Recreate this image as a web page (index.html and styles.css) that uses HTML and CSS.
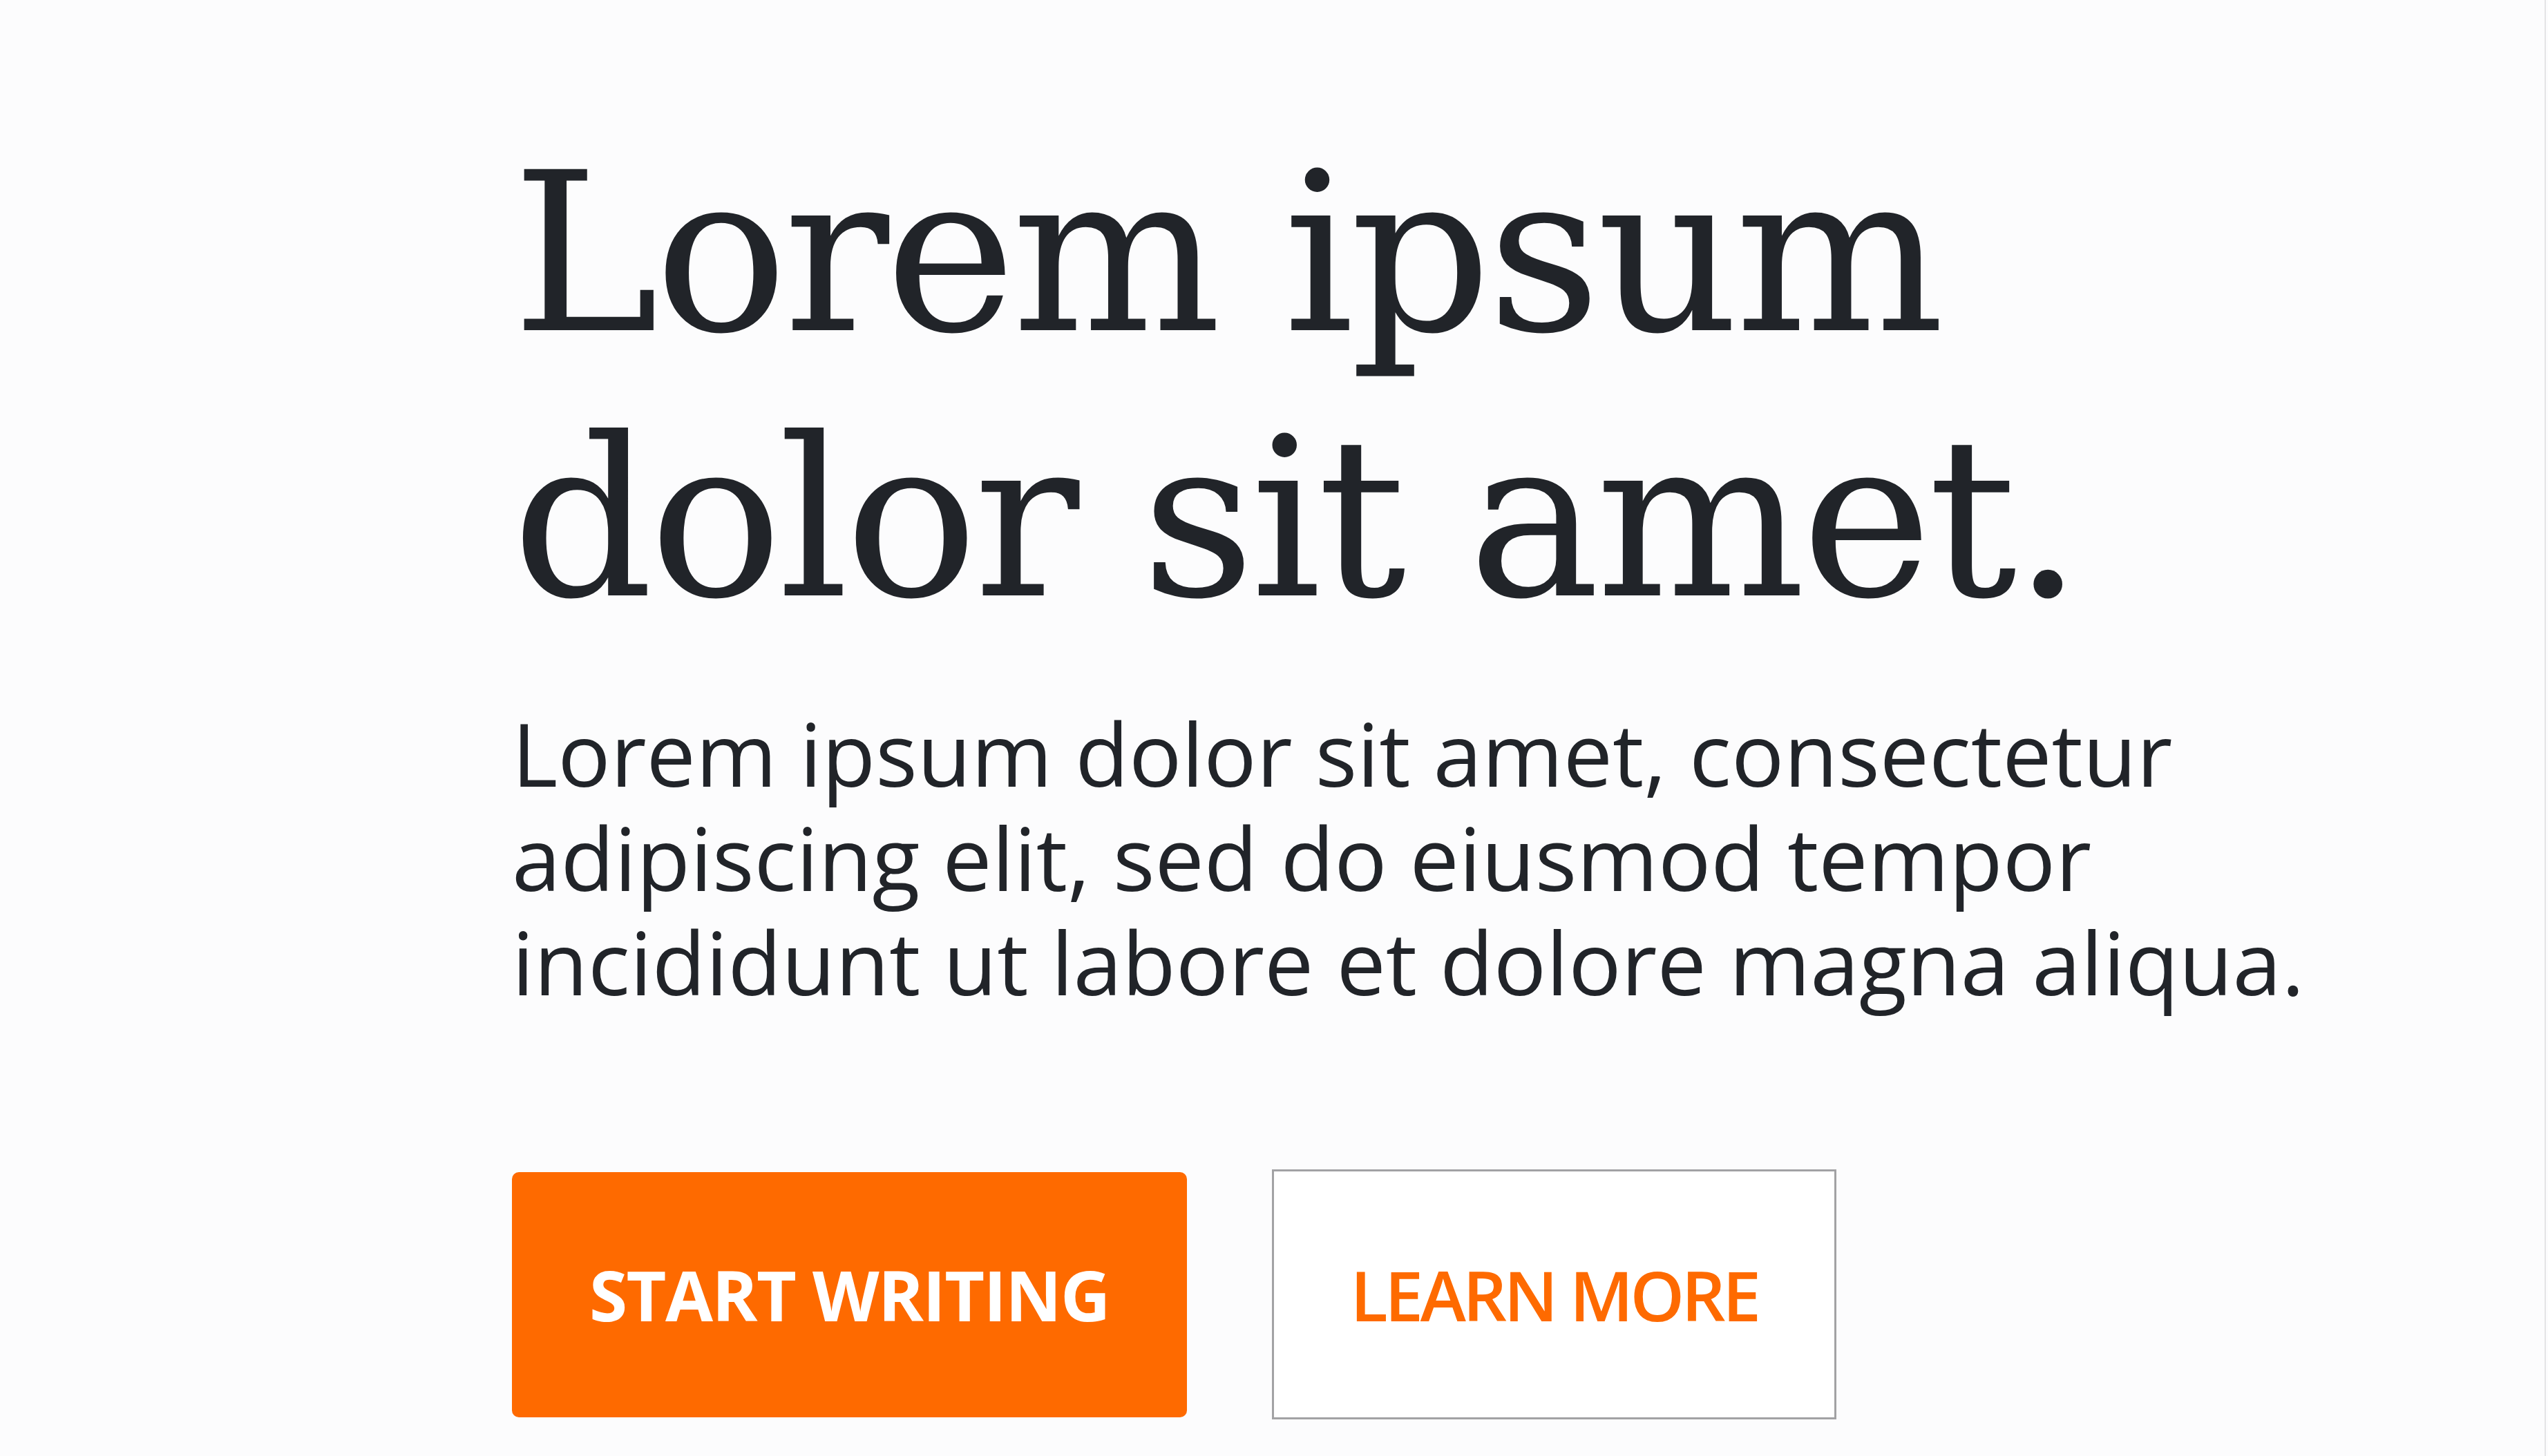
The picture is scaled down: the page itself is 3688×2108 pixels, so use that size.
FILE: index.html
```html
<!DOCTYPE html>
<html lang="en">
<head>
<meta charset="utf-8">
<title>Lorem ipsum</title>
<link rel="stylesheet" href="styles.css">
</head>
<body>
<div class="page">
  <main class="hero">
    <h1 class="hero-title">Lorem ipsum dolor sit amet.</h1>
    <p class="hero-lead">Lorem ipsum dolor sit amet, consectetur adipiscing elit, sed do eiusmod tempor incididunt ut labore et dolore magna aliqua.</p>
    <div class="hero-actions">
      <a class="btn btn-primary" href="#">Start Writing</a>
      <a class="btn btn-outline" href="#">Learn More</a>
    </div>
  </main>
</div>
</body>
</html>
```
FILE: styles.css
```css
html, body {
  margin: 0;
  padding: 0;
  background: #fcfcfd;
}

.page {
  box-sizing: border-box;
  min-height: 100vh;
  margin-right: 3px;
  border-right: 2px solid #e4e4e6;
  padding: 175px 0 0 741px;
}

.hero {
  width: 2800px;
}

.hero-title {
  margin: 0;
  font-family: "DejaVu Serif", serif;
  font-weight: 400;
  font-size: 320px;
  line-height: 384px;
  letter-spacing: -6px;
  color: #212429;
}

.hero-lead {
  margin: 71px 0 0;
  font-family: "Open Sans", sans-serif;
  font-size: 127px;
  line-height: 151px;
  color: #212429;
}

.hero-actions {
  display: flex;
  align-items: center;
  gap: 123px;
  margin-top: 226px;
}

.btn {
  box-sizing: border-box;
  display: flex;
  align-items: center;
  justify-content: center;
  font-family: "Open Sans", sans-serif;
  font-size: 100px;
  line-height: 1;
  text-transform: uppercase;
  text-decoration: none;
}

.btn-primary {
  width: 977px;
  height: 355px;
  background: #fe6a00;
  color: #ffffff;
  font-weight: 700;
  letter-spacing: -1.5px;
  border-radius: 10px;
}

.btn-outline {
  width: 817px;
  height: 362px;
  border: 3px solid #a2a2a4;
  background: #ffffff;
  color: #fe6a00;
  font-weight: 600;
  letter-spacing: -4.5px;
}
```
